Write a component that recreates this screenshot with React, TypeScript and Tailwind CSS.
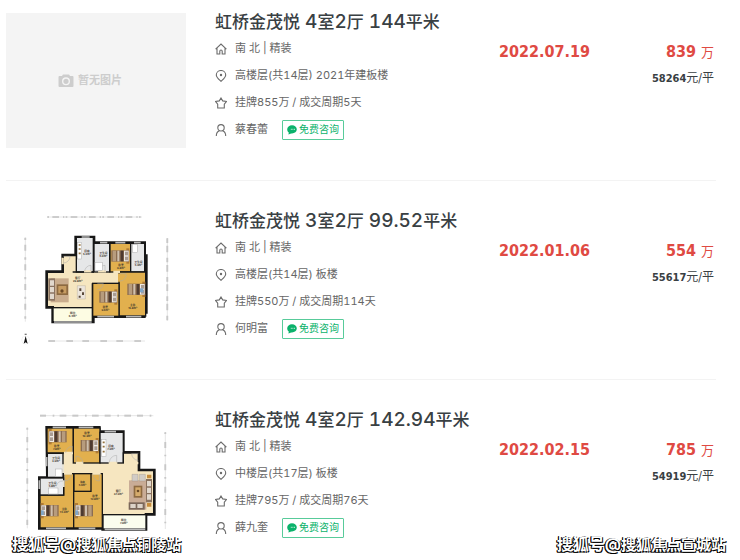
import React from "react";

type House = {
  id: number;
  title: string;
  direction: string;
  floor: string;
  deal: string;
  agent: string;
  date: string;
  price: string;
  unitPrice: string;
};

const houses: House[] = [
  {
    id: 1,
    title: "虹桥金茂悦 4室2厅 144平米",
    direction: "南 北 | 精装",
    floor: "高楼层(共14层) 2021年建板楼",
    deal: "挂牌855万 / 成交周期5天",
    agent: "蔡春蕾",
    date: "2022.07.19",
    price: "839",
    unitPrice: "58264",
  },
  {
    id: 2,
    title: "虹桥金茂悦 3室2厅 99.52平米",
    direction: "南 北 | 精装",
    floor: "高楼层(共14层) 板楼",
    deal: "挂牌550万 / 成交周期114天",
    agent: "何明富",
    date: "2022.01.06",
    price: "554",
    unitPrice: "55617",
  },
  {
    id: 3,
    title: "虹桥金茂悦 4室2厅 142.94平米",
    direction: "南 北 | 精装",
    floor: "中楼层(共17层) 板楼",
    deal: "挂牌795万 / 成交周期76天",
    agent: "薛九奎",
    date: "2022.02.15",
    price: "785",
    unitPrice: "54919",
  },
];

const iconProps = {
  viewBox: "0 0 12 12",
  fill: "none",
  stroke: "#6b6b6b",
  strokeWidth: 1.1,
  className: "size-3 shrink-0",
  "aria-hidden": true,
};

const HomeIcon = () => (
  <svg {...iconProps}>
    <path d="M.6 6.200 6 1l5.400 5.200M2 5.200V11h2.800V8.200a1.200 1.200 0 0 1 2.400 0V11H10V5.200" />
  </svg>
);

const PinIcon = () => (
  <svg {...iconProps}>
    <path d="M6 11.400C3.500 9 1.300 7.300 1.300 5a4.700 4.500 0 0 1 9.400 0c0 2.300-2.200 4-4.700 6.400Z" />
    <circle cx="6" cy="5" r="1.200" fill="#6b6b6b" stroke="none" />
  </svg>
);

const StarIcon = () => (
  <svg {...iconProps}>
    <path d="m6 1 1.700 2.900 3.900.5L9.300 7.200V11H2.700V7.200L.4 4.400l3.900-.5Z" />
  </svg>
);

const UserIcon = () => (
  <svg {...iconProps}>
    <circle cx="6" cy="3.800" r="3.200" />
    <path d="M1.300 12c0-2.800 1.300-4.500 3.100-5.200M10.700 12c0-2.800-1.300-4.500-3.100-5.200" />
  </svg>
);

const ChatIcon = () => (
  <svg viewBox="0 0 10 10" className="size-2.5 shrink-0" aria-hidden>
    <path
      d="M5 .2c2.700 0 4.800 1.700 4.800 4.100S7.700 8.400 5 8.400H4.200L1.400 9.600l.4-2C.8 6.800.2 5.700.2 4.300.2 1.900 2.300.2 5 .2Z"
      fill="#0bb26b"
    />
    <path d="M3.800 4.300h1M5.400 4.300h1M7 4.300h1" stroke="#fff" strokeWidth="0.8" />
  </svg>
);

type BedProps = { x: number; y: number; flip?: boolean };

const Bed = ({ x, y, flip }: BedProps) => (
  <g transform={`translate(${x} ${y})${flip ? " translate(54 0) scale(-1 1)" : ""}`}>
    <rect y="-6" width="9" height="8" fill="#b07b35" />
    <rect y="32" width="9" height="8" fill="#b07b35" />
    <rect width="54" height="34" fill="#8b6d52" />
    <rect x="2" y="1" width="14" height="32" fill="#eee9e4" />
    <rect x="4" y="4" width="9" height="11" fill="#a99c92" />
    <rect x="4" y="19" width="9" height="11" fill="#a99c92" />
    <rect x="18" y="1" width="8" height="32" fill="#4d3a30" />
    <rect x="30" y="1" width="6" height="32" fill="#cfc0ae" />
    <rect x="40" y="1" width="10" height="32" fill="#b79c7d" />
  </g>
);

type RoomLabelProps = { x: number; y: number; name: string; area: string };

const RoomLabel = ({ x, y, name, area }: RoomLabelProps) => (
  <text
    x={x}
    y={y}
    textAnchor="middle"
    fill="#3a342c"
    className="text-[8px] font-bold"
  >
    {name}
    <tspan x={x} dy="9">
      {area}
    </tspan>
  </text>
);

const PlanThree = () => (
  <svg viewBox="-12 21 540 405" className="w-full" role="img" aria-label="3室2厅户型图">
    <g stroke="#b4b4b4" strokeWidth="5" fill="none">
      <path d="M112 36h284" strokeDasharray="5 10 20 12 4 4" />
      <path d="M46 98v252" strokeDasharray="7 14 18 20" />
      <path d="M472 100v247" strokeDasharray="14 8 20 16" />
      <path d="M115 408h290" strokeDasharray="20 34 20 28" />
    </g>
    <g stroke="#d9d9d9" strokeWidth="2" fill="none">
      <path d="M112 36h284M46 98v252M472 100v247M115 408h290" />
    </g>
    <circle cx="47" cy="405" r="12" fill="#fff" stroke="#ddd" />
    <path d="m47 393 6 23-6-4-6 4Z" fill="#111" />
    <path d="M44 388h6" stroke="#777" strokeWidth="4" />

    <path
      d="M197 96H252V113H404V152H409V322H403V335H250V351H128V307H110V200H158V150H197Z"
      fill="#f6e6c0"
      stroke="#171717"
      strokeWidth="8"
    />
    <g stroke="#171717" strokeWidth="4">
      <rect x="199" y="97" width="51" height="104" fill="#e6e7e8" />
      <rect x="252" y="115" width="47" height="86" fill="#e6e7e8" />
      <rect x="300" y="115" width="62" height="86" fill="#e2b04e" />
      <rect x="362" y="115" width="42" height="86" fill="#e6e7e8" />
      <path d="M327 201H407V333H327Z" fill="#e2b04e" />
      <rect x="248" y="235" width="79" height="99" fill="#e2b04e" />
      <rect x="129" y="308" width="118" height="42" fill="#fdfce3" />
      <path d="M188 201H252M247 235V308" fill="none" />
    </g>
    <path d="M222 199h22M264 199h24M310 201h20M158 158v20" stroke="#f6e6c0" strokeWidth="7" />
    <path d="M327 206v24" stroke="#e2b04e" strokeWidth="6" />
    <g stroke="#b9b9b9" strokeWidth="5">
      <path d="M215 96h24M270 113h22M316 113h30M372 113h20M132 351h113M262 335h50M348 335h46" />
    </g>
    <g fill="#fff" stroke="#aaa" strokeWidth="1.500">
      <path d="M243 200v-19a19 19 0 0 0-19 19M285 200v-19a19 19 0 0 0-19 19M160 154h20a20 20 0 0 1-20 20M330 206h18a18 18 0 0 1-18 22M262 236h18a18 18 0 0 1-18 18" fill="none" />
      <rect x="203" y="112" width="12" height="50" />
      <rect x="255" y="172" width="22" height="24" />
      <rect x="368" y="118" width="14" height="25" />
    </g>
    <path d="M206 120h6M206 132h6M206 145h6" stroke="#94723e" strokeWidth="5" />

    <path d="M122 220h54v72h-54Z" fill="#c9ac8d" />
    <path d="M115 220h20v67h-20Z" fill="#8a7360" />
    <path d="M120 226h12v16h-12ZM120 246h12v16h-12ZM120 266h12v16h-12Z" fill="#e1d8cd" />
    <path d="M140 238h34v32h-34Z" fill="#8d6a41" />
    <path d="M145 243h24v22h-24Z" fill="#c79c61" />
    <circle cx="156" cy="258" r="5" fill="#6b4a27" />
    <path d="M202 242h24v40h-24Z" fill="#ece5dc" stroke="#a49788" />
    <path d="M208 250h6v8h-6ZM216 262h6v8h-6ZM206 272h6v6h-6Z" fill="#594839" />

    <Bed x={304} y={136} flip />
    <Bed x={268} y={259} flip />
    <Bed x={352} y={236} flip />
    <rect x="390" y="250" width="10" height="12" fill="#7fa6c8" />

    <RoomLabel x={231} y={140} name="厨房" area="5.2m²" />
    <RoomLabel x={280} y={147} name="卫生间" area="4.0m²" />
    <RoomLabel x={333} y={183} name="卧室" area="9.8m²" />
    <RoomLabel x={385} y={174} name="卫生间" area="4.3m²" />
    <RoomLabel x={203} y={221} name="客厅" area="29.8m²" />
    <RoomLabel x={286} y={308} name="卧室" area="9.6m²" />
    <RoomLabel x={368} y={302} name="主卧" area="15.8m²" />
    <RoomLabel x={188} y={327} name="阳台" area="6.4m²" />
  </svg>
);

const PlanFour = () => (
  <svg viewBox="-12 18 540 405" className="w-full" role="img" aria-label="4室2厅户型图">
    <g stroke="#b4b4b4" strokeWidth="5" fill="none">
      <path d="M90 32h340" strokeDasharray="18 20 5 16 20 18" />
      <path d="M52 68v302" strokeDasharray="6 22 16 18" />
      <path d="M466 82v290" strokeDasharray="5 24 18 20" />
    </g>
    <g stroke="#d9d9d9" strokeWidth="2" fill="none">
      <path d="M90 32h340M52 68v302M466 82v290" />
    </g>

    <path
      d="M110 67H268V80H340V142H387V195H433V328H408V373H278V370H88V218H112Z"
      fill="#f6e6c0"
      stroke="#171717"
      strokeWidth="8"
    />
    <g stroke="#171717" strokeWidth="4">
      <rect x="111" y="69" width="79" height="75" fill="#e2b04e" />
      <rect x="190" y="69" width="80" height="105" fill="#e2b04e" />
      <rect x="270" y="82" width="70" height="92" fill="#e6e7e8" />
      <rect x="112" y="145" width="47" height="72" fill="#e6e7e8" />
      <path d="M161 206H191V369H90V270H161Z" fill="#e2b04e" />
      <rect x="90" y="219" width="71" height="51" fill="#e6e7e8" />
      <path d="M191 206H277V369H191Z" fill="#e2b04e" />
      <rect x="192" y="206" width="51" height="53" fill="#e2b04e" />
      <rect x="279" y="329" width="129" height="43" fill="#fbfdee" />
      <path d="M340 142V174" fill="none" />
    </g>
    <path d="M162 144h27M198 174h22M296 174h26M162 206h24M247 206h25M345 174h40" stroke="#f6e6c0" strokeWidth="7" />
    <path d="M159 178v26M161 226v20" stroke="#e8e3d5" strokeWidth="6" />
    <g stroke="#b9b9b9" strokeWidth="5">
      <path d="M128 67h40M206 67h44M284 80h34M110 156v28M88 226v26M108 370h60M206 370h50M284 373h122" />
    </g>
    <g fill="none" stroke="#aaa" strokeWidth="1.500">
      <path d="M187 144v-20a20 20 0 0 0-20 20M198 173v-20a20 20 0 0 1 20 20M320 173v-22a22 22 0 0 0-22 22M385 146h-20a20 20 0 0 0 20 20M164 208v20a20 20 0 0 0 20-20M248 208a20 20 0 0 0 20 20v-20M159 228a20 20 0 0 0-20 16" />
      <rect x="275" y="103" width="13" height="52" fill="#fff" />
      <rect x="136" y="192" width="20" height="22" fill="#fff" />
      <rect x="116" y="249" width="28" height="18" fill="#fff" />
    </g>
    <path d="M278 112h6M278 125h6M278 140h6" stroke="#94723e" strokeWidth="5" />

    <path d="M357 226h52v88h-52Z" fill="#c9ac96" />
    <path d="M366 208h18v20h-18ZM388 208h18v20h-18Z" fill="#d1ccc6" stroke="#94887c" />
    <path d="M408 222h18v70h-18Z" fill="#8a7360" />
    <path d="M411 228h12v16h-12ZM411 248h12v16h-12ZM411 268h12v16h-12Z" fill="#e1d8cd" />
    <path d="M356 292h48v22h-48Z" fill="#7a675a" />
    <path d="M361 297h16v12h-16ZM382 297h16v12h-16Z" fill="#ddd3c8" />
    <path d="M371 242h26v36h-26Z" fill="#8d6a41" />
    <path d="M376 247h16v26h-16Z" fill="#d5ab6c" />
    <circle cx="384" cy="258" r="4" fill="#6b4a27" />
    <path d="M411 209h13v11h-13ZM411 294h13v11h-13Z" fill="#c68c3c" />

    <Bed x={116} y={78} />
    <Bed x={212} y={105} flip />
    <Bed x={92} y={300} />
    <Bed x={195} y={300} />
    <rect x="93" y="316" width="8" height="14" fill="#7fa6c8" />
    <rect x="196" y="316" width="8" height="14" fill="#7fa6c8" />

    <RoomLabel x={140} y={126} name="卧室" area="7.8m²" />
    <RoomLabel x={231} y={87} name="卧室" area="10.3m²" />
    <RoomLabel x={303} y={127} name="厨房" area="7.3m²" />
    <RoomLabel x={138} y={163} name="卫生间" area="3.9m²" />
    <RoomLabel x={127} y={238} name="卫生间" area="4.8m²" />
    <RoomLabel x={217} y={233} name="书房" area="4.6m²" />
    <RoomLabel x={163} y={316} name="主卧" area="14.3m²" />
    <RoomLabel x={255} y={277} name="卧室" area="12.8m²" />
    <RoomLabel x={325} y={261} name="客厅" area="37.3m²" />
    <RoomLabel x={341} y={348} name="阳台" area="7.0m²" />
  </svg>
);

const NoPicture = () => (
  <div className="flex aspect-[4/3] items-center justify-center gap-1 bg-[#f4f4f4] pr-3 text-[11px] font-bold text-[#cdcdcd]">
    <svg viewBox="0 0 16 14" className="h-3.5 w-4" aria-hidden>
      <path
        d="M1.500 2H4l1-1.500h6L12 2h2.500q1 0 1 1v9q0 1-1 1h-13q-1 0-1-1V3q0-1 1-1Z"
        fill="#cdcdcd"
      />
      <circle cx="8" cy="7.300" r="3.300" fill="#cdcdcd" stroke="#f4f4f4" strokeWidth="1.400" />
    </svg>
    暂无图片
  </div>
);

const pictures: Record<number, React.ReactNode> = {
  1: <NoPicture />,
  2: <PlanThree />,
  3: <PlanFour />,
};

const Title = ({ text }: { text: string }) => (
  <h2 className="text-[17px] leading-[18px] font-medium whitespace-nowrap text-[#394043] tabular-nums">
    <a href="#">
      {text.split(/([\d. ]+)/).map((part, i) =>
        i % 2 === 1 ? (
          <span key={i} className="text-[19px]">
            {part}
          </span>
        ) : (
          part
        )
      )}
    </a>
  </h2>
);

const HouseItem = ({ house }: { house: House }) => (
  <li className="flex border-b border-[#f3f3f3] pb-8">
    <a href="#" className="block w-[180px] shrink-0">
      {pictures[house.id]}
    </a>
    <div className="ml-[29px] min-w-0 flex-1">
      <Title text={house.title} />
      <ul className="mt-1 text-[11px] text-[#666] tabular-nums">
        <li className="flex h-[27px] items-center gap-2">
          <HomeIcon />
          {house.direction}
        </li>
        <li className="flex h-[27px] items-center gap-2">
          <PinIcon />
          {house.floor}
        </li>
        <li className="flex h-[27px] items-center gap-2">
          <StarIcon />
          {house.deal}
        </li>
        <li className="flex h-[27px] items-center gap-2">
          <UserIcon />
          {house.agent}
          <button
            type="button"
            className="ml-1.5 flex h-5 items-center gap-0.5 rounded-[1px] border border-[#58cb9a] px-1 text-[10px] text-[#0bb26b]"
          >
            <ChatIcon />
            免费咨询
          </button>
        </li>
      </ul>
    </div>
    <div className="flex w-[217px] shrink-0 justify-between pt-7 pr-0.5 font-['DejaVu_Sans_Condensed','DejaVu_Sans','Noto_Sans_CJK_SC',sans-serif]">
      <p className="text-base leading-[22px] font-bold text-[#df4a43]">{house.date}</p>
      <div className="text-right">
        <p className="text-base leading-[22px] font-bold text-[#df4a43]">
          {house.price} <span className="text-[13px] font-normal">万</span>
        </p>
        <p className="mt-1.5 text-[12px] leading-4 text-[#394043]">
          <span className="text-[11px] font-bold">{house.unitPrice}</span>元/平
        </p>
      </div>
    </div>
  </li>
);

const Watermark = ({ city }: { city: string }) => (
  <span>
    <span className="text-base">搜狐号@</span>搜狐焦点{city}站
  </span>
);

const App = () => {
  return (
    <main className="relative min-h-screen overflow-hidden bg-white pt-[13px] pr-6 pl-1.5 font-['Inter','Noto_Sans_CJK_SC',sans-serif]">
      <ul className="flex flex-col gap-[31px]">
        {houses.map((house) => (
          <HouseItem key={house.id} house={house} />
        ))}
      </ul>
      <div className="absolute inset-x-3 top-[532px] flex justify-between pr-0.5 text-[15px] leading-5 font-bold text-white [text-shadow:-1px_0_0_#000,-1px_1px_0_#000,1px_1px_0_#000]">
        <Watermark city="铜陵" />
        <Watermark city="宣城" />
      </div>
    </main>
  );
};

export default App;
